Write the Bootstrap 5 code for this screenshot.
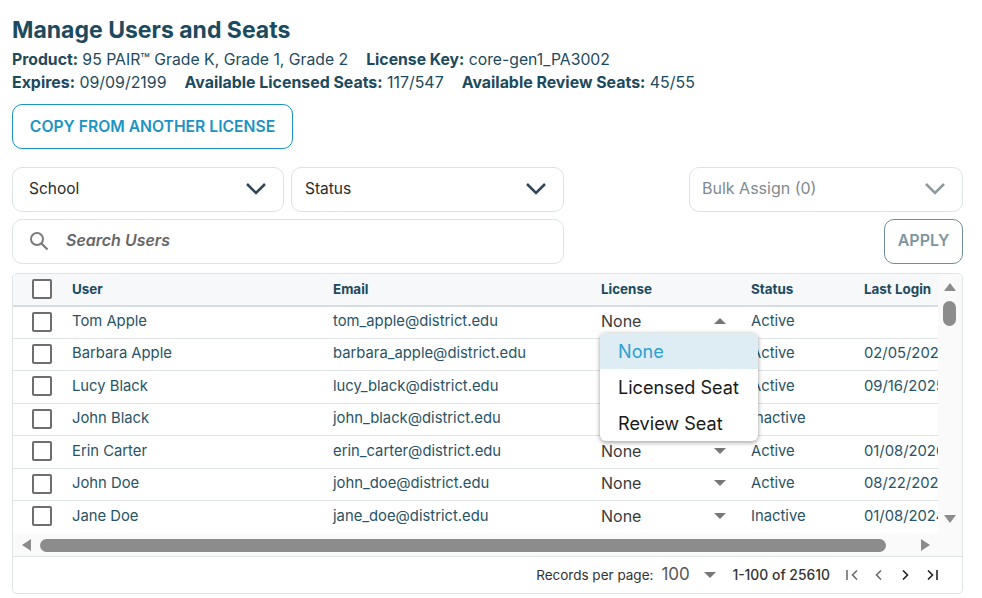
<!DOCTYPE html>
<html lang="en">
<head>
<meta charset="utf-8">
<title>Manage Users and Seats</title>
<link href="https://cdn.jsdelivr.net/npm/bootstrap@5.3.0/dist/css/bootstrap.min.css" rel="stylesheet">
<style>
html,body{height:100%;overflow:hidden}
body{font-family:Inter,"Liberation Sans",sans-serif;color:#1c4a5e;background:#fff}
.pg{padding:17px 19px 0 12px}
.ttl{font-size:23px;line-height:26px;font-weight:700;color:#1c4a5e;margin:0 0 5px}
.inf{font-size:15.75px;line-height:23px;color:#1c4a5e;display:flex;gap:18px;white-space:nowrap}
.inf2{font-size:15.9px}
.inf b{font-weight:700}
.cpy{height:45px;width:281px;border:1px solid #1b94c4;border-radius:10px;color:#1b94c4;background:#fff;font-weight:600;font-size:15.7px;padding:0;margin:10px 0 18px}
.ctl{height:45px;border:1px solid #dbe3e6;border-radius:10px;background:#fff;display:flex;align-items:center;justify-content:space-between;font-size:15.5px;color:#2b2b2b;padding:0 16px 2px}
.lft{width:552px;gap:7px}
.rgt{width:274px;margin-left:auto}
.sch{width:272px}
.sts{width:273px;padding-left:13px}
.blk{color:#7f8a8f;padding:0 16px 4px 12px;width:274px;font-size:16px}
.blk svg,.srch svg{margin-top:2px}
.srch{width:552px;justify-content:flex-start;gap:17px;padding-bottom:4px}
.srch em{font-weight:600;font-size:16px;color:#666}
.row2{margin-top:7px}
.apl{margin-left:auto;width:79px;height:45px;border:1px solid #6f8f9b;border-radius:10px;background:#fff;color:#7d959f;font-weight:600;font-size:16px;padding:0 0 3px}
.tbox{margin-top:9px;border:1px solid #e0e3e5;border-radius:5px;width:951px;height:321px;overflow:hidden}
.vw{width:926px;height:259px;overflow:hidden}
.vbar{width:24px;height:259px;background:#fafafa;position:relative}
.tb{table-layout:fixed;width:1010px;margin:0;border-collapse:collapse}
.tb th{height:31.6px;background:#f6f8fa;color:#1c4a5e;font-size:13.4px;font-weight:700;padding:0;border-bottom:2px solid #d5dde1;vertical-align:middle}
.tb td{height:32.5px;padding:0 0 2px;color:#285366;font-size:14.8px;border-bottom:1px solid #e1e4e6;vertical-align:middle;box-shadow:none}
.cbx{display:block;width:20px;height:20px;border:2px solid #6e6e6e;border-radius:2px;background:#fff;margin:1px 0 0 19px}
.tb th .cbx{margin-top:-1px}
.lic{display:flex;align-items:center;justify-content:space-between;width:125px;color:#3a3a3a;font-size:16px}
.mnu{top:26px;left:-1px;width:158px;padding:0;border:0;border-radius:6px;box-shadow:0 1px 5px rgba(0,0,0,.3),0 2px 4px rgba(0,0,0,.12);overflow:hidden;min-width:0}
.mnu .dropdown-item{height:36px;line-height:36px;padding:0 0 0 18px;font-size:18.1px;color:#1a1a1a}
.mnu .dropdown-item.active{background:#deecf4;color:#2aa1d3}
.hbar{height:24px;background:#fafafa;border-bottom:1px solid #e0e3e5;padding:5px 0 4px 9px}
.thb{display:block;width:846px;height:13px;background:#8c8c8c;border-radius:7px;margin:0 35px 0 9px}
.vthb{position:absolute;left:5px;top:27px;width:13px;height:25px;background:#8c8c8c;border-radius:7px}
.ua{position:absolute;left:6px;top:9px}.da{position:absolute;left:6px;top:241px}
.ftr{height:36px;font-size:13.5px;color:#333;padding-right:24px}
.ftr .hun{font-size:17px;color:#555;margin-left:8px;width:43px}
.rng{font-weight:500;margin:0 16px;font-size:13.9px;color:#333}
.pgr{gap:14px}
</style>
</head>
<body>
<div class="pg">
  <h1 class="ttl">Manage Users and Seats</h1>
  <div class="inf"><span><b>Product:</b> 95 PAIR™ Grade K, Grade 1, Grade 2</span><span><b>License Key:</b> core-gen1_PA3002</span></div>
  <div class="inf inf2"><span><b>Expires:</b> 09/09/2199</span><span><b>Available Licensed Seats:</b> 117/547</span><span><b>Available Review Seats:</b> 45/55</span></div>
  <button class="btn cpy d-block" type="button">COPY FROM ANOTHER LICENSE</button>

  <div class="d-flex">
    <div class="d-flex lft">
      <div class="ctl sch"><span>School</span><svg width="22" height="13" viewBox="0 0 22 13"><path d="M2 2l9 9 9-9" fill="none" stroke="#33475a" stroke-width="2.6"/></svg></div>
      <div class="ctl sts"><span>Status</span><svg width="22" height="13" viewBox="0 0 22 13"><path d="M2 2l9 9 9-9" fill="none" stroke="#33475a" stroke-width="2.6"/></svg></div>
    </div>
    <div class="ctl blk rgt"><span>Bulk Assign (0)</span><svg width="22" height="13" viewBox="0 0 22 13"><path d="M2 2l9 9 9-9" fill="none" stroke="#8f9ba1" stroke-width="2.6"/></svg></div>
  </div>
  <div class="d-flex row2">
    <div class="ctl srch"><svg width="20" height="20" viewBox="0 0 20 20"><circle cx="8" cy="8" r="6" fill="none" stroke="#7b7b7b" stroke-width="2"/><path d="M12.5 12.5l6 6" stroke="#7b7b7b" stroke-width="2.2"/></svg><em>Search Users</em></div>
    <button class="btn apl" type="button">APPLY</button>
  </div>

  <div class="tbox">
    <div class="d-flex">
      <div class="vw">
        <table class="table tb">
          <colgroup><col style="width:59px"><col style="width:261px"><col style="width:268px"><col style="width:150px"><col style="width:113px"><col style="width:159px"></colgroup>
          <thead><tr><th><span class="cbx"></span></th><th>User</th><th>Email</th><th>License</th><th>Status</th><th>Last Login</th></tr></thead>
          <tbody>
            <tr><td><span class="cbx"></span></td><td>Tom Apple</td><td>tom_apple@district.edu</td>
              <td class="position-relative"><div class="lic"><span>None</span><svg width="12" height="6" viewBox="0 0 12 6"><path d="M0 6l6-6 6 6z" fill="#777"/></svg></div>
                <ul class="dropdown-menu show mnu list-unstyled m-0">
                  <li class="dropdown-item active">None</li><li class="dropdown-item">Licensed Seat</li><li class="dropdown-item">Review Seat</li>
                </ul></td>
              <td>Active</td><td></td></tr>
            <tr><td><span class="cbx"></span></td><td>Barbara Apple</td><td>barbara_apple@district.edu</td><td><div class="lic"><span>None</span></div></td><td>Active</td><td>02/05/2024</td></tr>
            <tr><td><span class="cbx"></span></td><td>Lucy Black</td><td>lucy_black@district.edu</td><td><div class="lic"><span>None</span></div></td><td>Active</td><td>09/16/2025</td></tr>
            <tr><td><span class="cbx"></span></td><td>John Black</td><td>john_black@district.edu</td><td><div class="lic"><span>None</span></div></td><td>Inactive</td><td></td></tr>
            <tr><td><span class="cbx"></span></td><td>Erin Carter</td><td>erin_carter@district.edu</td><td><div class="lic"><span>None</span><svg width="12" height="6" viewBox="0 0 12 6"><path d="M0 0l6 6 6-6z" fill="#777"/></svg></div></td><td>Active</td><td>01/08/2026</td></tr>
            <tr><td><span class="cbx"></span></td><td>John Doe</td><td>john_doe@district.edu</td><td><div class="lic"><span>None</span><svg width="12" height="6" viewBox="0 0 12 6"><path d="M0 0l6 6 6-6z" fill="#777"/></svg></div></td><td>Active</td><td>08/22/2024</td></tr>
            <tr><td><span class="cbx"></span></td><td>Jane Doe</td><td>jane_doe@district.edu</td><td><div class="lic"><span>None</span><svg width="12" height="6" viewBox="0 0 12 6"><path d="M0 0l6 6 6-6z" fill="#777"/></svg></div></td><td>Inactive</td><td>01/08/2024</td></tr>
          </tbody>
        </table>
      </div>
      <div class="vbar">
        <svg class="ua" width="12" height="8" viewBox="0 0 12 8"><path d="M0 8l6-8 6 8z" fill="#8c8c8c"/></svg>
        <span class="vthb"></span>
        <svg class="da" width="12" height="8" viewBox="0 0 12 8"><path d="M0 0l6 8 6-8z" fill="#8c8c8c"/></svg>
      </div>
    </div>
    <div class="hbar d-flex align-items-center">
      <svg width="9" height="12" viewBox="0 0 9 12"><path d="M9 0L0 6l9 6z" fill="#8c8c8c"/></svg>
      <span class="thb"></span>
      <svg width="9" height="12" viewBox="0 0 9 12"><path d="M0 0l9 6-9 6z" fill="#8c8c8c"/></svg>
    </div>
    <div class="ftr d-flex align-items-center justify-content-end">
      <span>Records per page:</span>
      <span class="hun">100</span>
      <svg width="12" height="6" viewBox="0 0 12 6"><path d="M0 0l6 6 6-6z" fill="#777"/></svg>
      <span class="rng">1-100 of 25610</span>
      <div class="d-flex align-items-center pgr">
        <svg width="12" height="10" viewBox="0 0 12 10"><path d="M1 0v10M11 .5L6.5 5l4.5 4.5" fill="none" stroke="#666" stroke-width="1.5"/></svg>
        <svg width="12" height="10" viewBox="0 0 12 10"><path d="M9 .5L4.5 5 9 9.5" fill="none" stroke="#666" stroke-width="1.5"/></svg>
        <svg width="12" height="10" viewBox="0 0 12 10"><path d="M5 .5L9.5 5 5 9.5" fill="none" stroke="#222" stroke-width="1.6"/></svg>
        <svg width="14" height="10" viewBox="0 0 14 10"><path d="M4 .5L8.5 5 4 9.5M13 0v10" fill="none" stroke="#222" stroke-width="1.6"/></svg>
      </div>
    </div>
  </div>
</div>
</body>
</html>
